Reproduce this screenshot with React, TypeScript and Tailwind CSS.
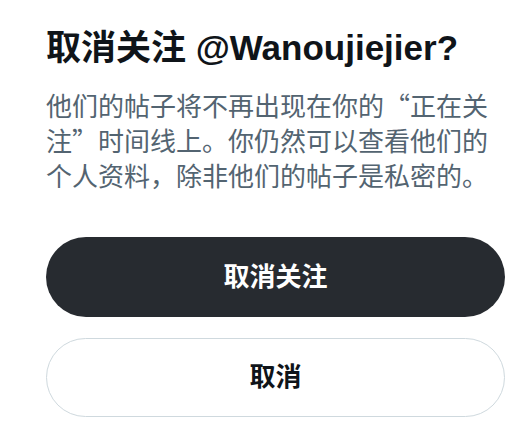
import React from "react";

export default function App() {
  return (
    <div
      lang="zh-CN"
      className="w-[532px] h-[448px] bg-white pl-[46px] pr-[27px] pt-[26px]"
      style={{ fontFamily: '"Liberation Sans", "Noto Sans CJK SC", sans-serif' }}
    >
      <h1 className="text-[35px] leading-[44px] font-bold text-[#0f1419] whitespace-nowrap">
        取消关注 @Wanoujiejier?
      </h1>
      <p
        className="mt-[17px] text-[26px] leading-[35px] text-[#536471]"
        style={{ fontFamily: '"Noto Sans CJK SC", sans-serif' }}
      >
        他们的帖子将不再出现在你的“正在关注”时间线上。你仍然可以查看他们的个人资料，除非他们的帖子是私密的。
      </p>
      <div className="mt-[45px] flex flex-col gap-[21px]">
        <button className="h-[80px] w-full rounded-full bg-[#272b30] text-white text-[26px] font-bold">
          取消关注
        </button>
        <button className="h-[79px] w-full rounded-full border border-[#cfd9de] bg-white text-[#0f1419] text-[26px] font-bold">
          取消
        </button>
      </div>
    </div>
  );
}
